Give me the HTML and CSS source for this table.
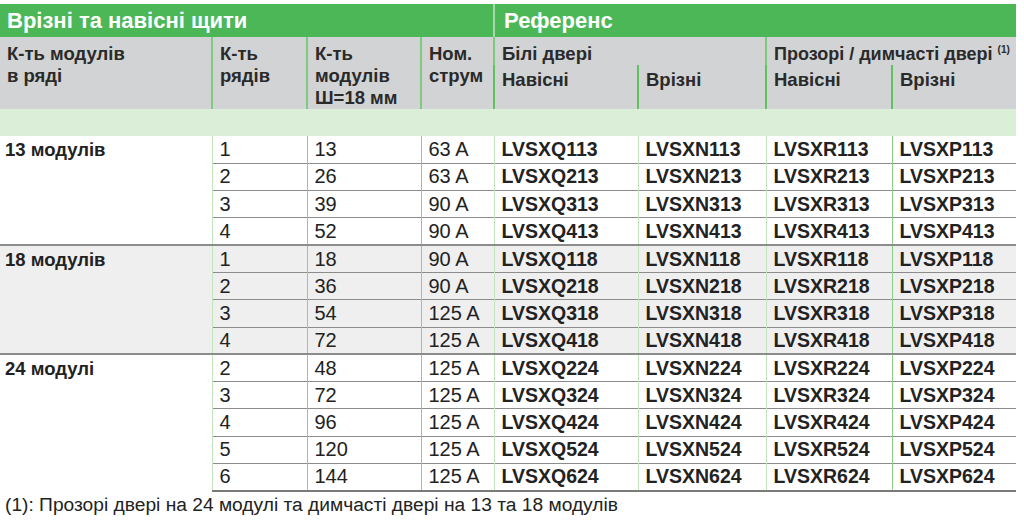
FILE: index.html
```html
<!DOCTYPE html>
<html lang="uk">
<head>
<meta charset="utf-8">
<title>Врізні та навісні щити</title>
<link rel="stylesheet" href="styles.css">
</head>
<body>
<table class="tbl">
  <colgroup>
    <col class="c1"><col class="c2"><col class="c3"><col class="c4">
    <col class="c5"><col class="c6"><col class="c7"><col class="c8">
  </colgroup>
  <thead>
    <tr class="title">
      <th colspan="4">Врізні та навісні щити</th>
      <th colspan="4" class="ref">Референс</th>
    </tr>
    <tr class="hd1">
      <th rowspan="2">К-ть модулів<br>в ряді</th>
      <th rowspan="2" class="vl">К-ть<br>рядів</th>
      <th rowspan="2" class="vl">К-ть<br>модулів<br>Ш=18 мм</th>
      <th rowspan="2" class="vl">Ном.<br>струм</th>
      <th colspan="2" class="vl">Білі двері</th>
      <th colspan="2" class="vl door2">Прозорі / димчасті двері <sup>(1)</sup></th>
    </tr>
    <tr class="hd2">
      <th class="vl">Навісні</th>
      <th class="vl">Врізні</th>
      <th class="vl">Навісні</th>
      <th class="vl">Врізні</th>
    </tr>
    <tr class="band"><td colspan="8"></td></tr>
  </thead>
  <tbody class="grp">
    <tr class="first"><th rowspan="4">13 модулів</th><td class="n">1</td><td class="n g">13</td><td class="n g">63 A</td><td class="code">LVSXQ113</td><td class="code">LVSXN113</td><td class="code">LVSXR113</td><td class="code g">LVSXP113</td></tr>
    <tr><td class="n">2</td><td class="n g">26</td><td class="n g">63 A</td><td class="code">LVSXQ213</td><td class="code">LVSXN213</td><td class="code">LVSXR213</td><td class="code g">LVSXP213</td></tr>
    <tr><td class="n">3</td><td class="n g">39</td><td class="n g">90 A</td><td class="code">LVSXQ313</td><td class="code">LVSXN313</td><td class="code">LVSXR313</td><td class="code g">LVSXP313</td></tr>
    <tr><td class="n">4</td><td class="n g">52</td><td class="n g">90 A</td><td class="code">LVSXQ413</td><td class="code">LVSXN413</td><td class="code">LVSXR413</td><td class="code g">LVSXP413</td></tr>
  </tbody>
  <tbody class="grp shade">
    <tr class="first"><th rowspan="4">18 модулів</th><td class="n">1</td><td class="n g">18</td><td class="n g">90 A</td><td class="code">LVSXQ118</td><td class="code">LVSXN118</td><td class="code">LVSXR118</td><td class="code g">LVSXP118</td></tr>
    <tr><td class="n">2</td><td class="n g">36</td><td class="n g">90 A</td><td class="code">LVSXQ218</td><td class="code">LVSXN218</td><td class="code">LVSXR218</td><td class="code g">LVSXP218</td></tr>
    <tr><td class="n">3</td><td class="n g">54</td><td class="n g">125 A</td><td class="code">LVSXQ318</td><td class="code">LVSXN318</td><td class="code">LVSXR318</td><td class="code g">LVSXP318</td></tr>
    <tr><td class="n">4</td><td class="n g">72</td><td class="n g">125 A</td><td class="code">LVSXQ418</td><td class="code">LVSXN418</td><td class="code">LVSXR418</td><td class="code g">LVSXP418</td></tr>
  </tbody>
  <tbody class="grp">
    <tr class="first"><th rowspan="5">24 модулі</th><td class="n">2</td><td class="n g">48</td><td class="n g">125 A</td><td class="code">LVSXQ224</td><td class="code">LVSXN224</td><td class="code">LVSXR224</td><td class="code g">LVSXP224</td></tr>
    <tr><td class="n">3</td><td class="n g">72</td><td class="n g">125 A</td><td class="code">LVSXQ324</td><td class="code">LVSXN324</td><td class="code">LVSXR324</td><td class="code g">LVSXP324</td></tr>
    <tr><td class="n">4</td><td class="n g">96</td><td class="n g">125 A</td><td class="code">LVSXQ424</td><td class="code">LVSXN424</td><td class="code">LVSXR424</td><td class="code g">LVSXP424</td></tr>
    <tr><td class="n">5</td><td class="n g">120</td><td class="n g">125 A</td><td class="code">LVSXQ524</td><td class="code">LVSXN524</td><td class="code">LVSXR524</td><td class="code g">LVSXP524</td></tr>
    <tr><td class="n">6</td><td class="n g">144</td><td class="n g">125 A</td><td class="code">LVSXQ624</td><td class="code">LVSXN624</td><td class="code">LVSXR624</td><td class="code g">LVSXP624</td></tr>
  </tbody>
</table>
<p class="note">(1): Прозорі двері на 24 модулі та димчасті двері на 13 та 18 модулів</p>
</body>
</html>
```

FILE: styles.css
```css
html, body {
  margin: 0;
  padding: 0;
  background: #ffffff;
}
body {
  padding-top: 4px;
  font-family: "Liberation Sans", Arial, sans-serif;
  color: #222222;
}
.tbl {
  border-collapse: collapse;
  table-layout: fixed;
  width: 1016px;
}
.c1 { width: 212px; }
.c2 { width: 95px; }
.c3 { width: 114px; }
.c4 { width: 73px; }
.c5 { width: 144px; }
.c6 { width: 128px; }
.c7 { width: 126px; }
.c8 { width: 124px; }

.tbl th, .tbl td {
  padding: 0 0 0 7px;
  text-align: left;
  vertical-align: top;
  overflow: hidden;
  white-space: nowrap;
}

.title th {
  background: #4cb757;
  color: #ffffff;
  font-size: 22px;
  font-weight: bold;
  height: 33px;
  line-height: 33px;
  padding-left: 7px;
  vertical-align: middle;
}
.title th.ref {
  border-left: 2px solid #a6d9a6;
  padding-left: 9px;
}

.hd1 th, .hd2 th {
  background: #d1d3d4;
  font-size: 18.5px;
  font-weight: bold;
  line-height: 22px;
  color: #2a2a2a;
}
.hd1 th {
  height: 28px;
  padding-top: 6px;
  box-sizing: border-box;
}
.hd1 th.vl {
  border-left: 2px solid #7fca7f;
}
.hd2 th {
  height: 43px;
  padding-top: 4px;
  box-sizing: border-box;
}
.hd2 th.vl {
  border-left: 2px solid #5fc15f;
}
.hd1 th.door2 {
  font-size: 18px;
}
.hd1 sup {
  font-size: 10px;
  line-height: 0;
  vertical-align: 7px;
}

.band td {
  background: #daeed8;
  height: 27px;
  padding: 0;
}

.grp th {
  font-size: 18.5px;
  font-weight: bold;
  padding-top: 3px;
  padding-left: 5px;
  color: #222222;
  border-top: 2px solid #8c8c8c;
}
.grp:first-of-type th {
  border-top: none;
}
.grp td {
  height: 27.3px;
  box-sizing: border-box;
  border-top: 1px solid #8c8c8c;
  border-left: 1px solid #c3e6bf;
  vertical-align: middle;
}
.grp td.g {
  border-left: 1px solid #8ccf88;
}
.grp tr.first td {
  border-top: 2px solid #8c8c8c;
}
.grp:first-of-type tr.first td {
  border-top: none;
}
.shade th, .shade td {
  background: #efefef;
}
.grp:last-of-type tr:last-child td {
  border-bottom: 2px solid #7a7a7a;
}

td.n {
  font-family: "Liberation Sans Narrow", "Liberation Sans", Arial, sans-serif;
  font-size: 20px;
  color: #222222;
}
td.code {
  font-size: 19.5px;
  font-weight: bold;
  color: #222222;
}

.note {
  margin: 0;
  padding: 2px 0 0 5px;
  font-family: "Liberation Sans Narrow", "Liberation Sans", Arial, sans-serif;
  font-size: 19.2px;
  color: #222222;
}
```
